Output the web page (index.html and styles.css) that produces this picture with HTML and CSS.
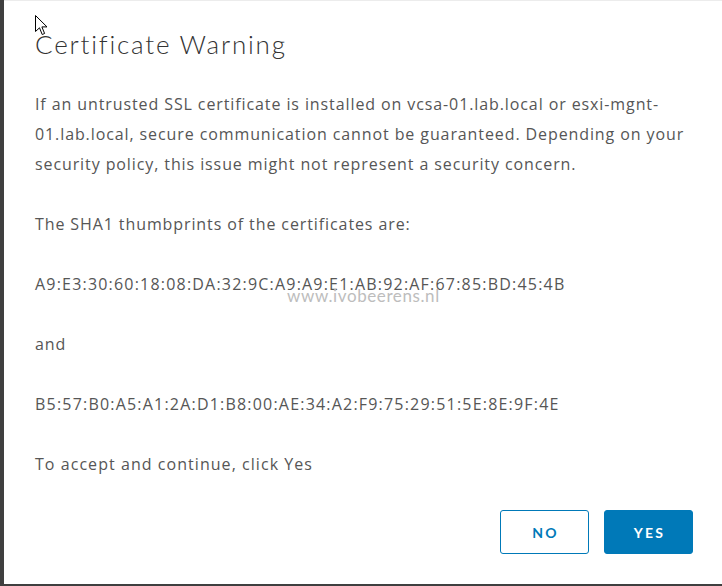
FILE: index.html
```html
<!DOCTYPE html>
<html>
<head>
<meta charset="utf-8">
<link rel="stylesheet" href="styles.css">
</head>
<body>
<div class="screen">
  <div class="dialog">
    <h1 class="title">Certificate Warning</h1>
    <div class="content">
      <p>If an untrusted SSL certificate is installed on vcsa-01.lab.local or esxi-mgnt-01.lab.local, secure communication cannot be guaranteed. Depending on your security policy, this issue might not represent a security concern.</p>
      <p>The SHA1 thumbprints of the certificates are:</p>
      <p class="thumb">A9:E3:30:60:18:08:DA:32:9C:A9:A9:E1:AB:92:AF:67:85:BD:45:4B</p>
      <p>and</p>
      <p class="thumb">B5:57:B0:A5:A1:2A:D1:B8:00:AE:34:A2:F9:75:29:51:5E:8E:9F:4E</p>
      <p class="last">To accept and continue, click Yes</p>
    </div>
    <div class="footer">
      <button class="btn btn-outline">NO</button>
      <button class="btn btn-primary">YES</button>
    </div>
    <span class="watermark">www.ivobeerens.nl</span>
    <svg class="cursor" width="13" height="21" viewBox="0 0 13 21">
      <path d="M0.5 0.5 L0.5 16.5 L4.5 12.8 L7.2 19.5 L9.6 18.5 L6.9 11.9 L12 11.9 Z" fill="#fff" stroke="#000" stroke-width="1" stroke-linejoin="miter"/>
    </svg>
  </div>
</div>
</body>
</html>
```
FILE: styles.css
```css
html, body {
  margin: 0;
  padding: 0;
}
body {
  background: #3f3f3f;
  width: 722px;
  height: 586px;
  overflow: hidden;
}
.screen {
  display: flex;
  padding-left: 4px;
  height: 584px;
}
.dialog {
  position: relative;
  flex: 1;
  min-width: 0;
  background: #fff;
  border-top: 1px solid #ececec;
  padding: 25px 29px 0 31px;
  display: flex;
  flex-direction: column;
  font-family: Lato, "Open Sans", sans-serif;
}
.title {
  margin: 0;
  font-size: 26px;
  line-height: 36px;
  font-weight: 300;
  color: #333;
  letter-spacing: 1.8px;
}
.content {
  margin-top: 27px;
  max-width: 652px;
}
.content p {
  margin: 0 0 30px 0;
  font-family: "Open Sans", sans-serif;
  font-size: 16px;
  line-height: 30px;
  color: #565656;
  letter-spacing: 0.9px;
}
.content .thumb {
  letter-spacing: 1.2px;
}
.content .last {
  margin-bottom: 0;
  letter-spacing: 1.05px;
}
.footer {
  margin-top: 31px;
  display: flex;
  justify-content: flex-end;
  gap: 15px;
}
.btn {
  width: 89px;
  height: 44px;
  border-radius: 3px;
  font-family: Lato, "Open Sans", sans-serif;
  font-size: 14px;
  font-weight: 700;
  letter-spacing: 2.2px;
  padding: 0 0 0 2px;
  cursor: pointer;
}
.btn-outline {
  background: #fff;
  border: 1px solid #0079b8;
  color: #0079b8;
}
.btn-primary {
  background: #0079b8;
  border: 1px solid #0079b8;
  color: #fff;
}
.watermark {
  position: absolute;
  left: 283px;
  top: 284px;
  font-family: Lato, sans-serif;
  font-size: 17px;
  color: #bdbdbd;
  letter-spacing: 0.6px;
}
.cursor {
  position: absolute;
  left: 31px;
  top: 14px;
}
```
